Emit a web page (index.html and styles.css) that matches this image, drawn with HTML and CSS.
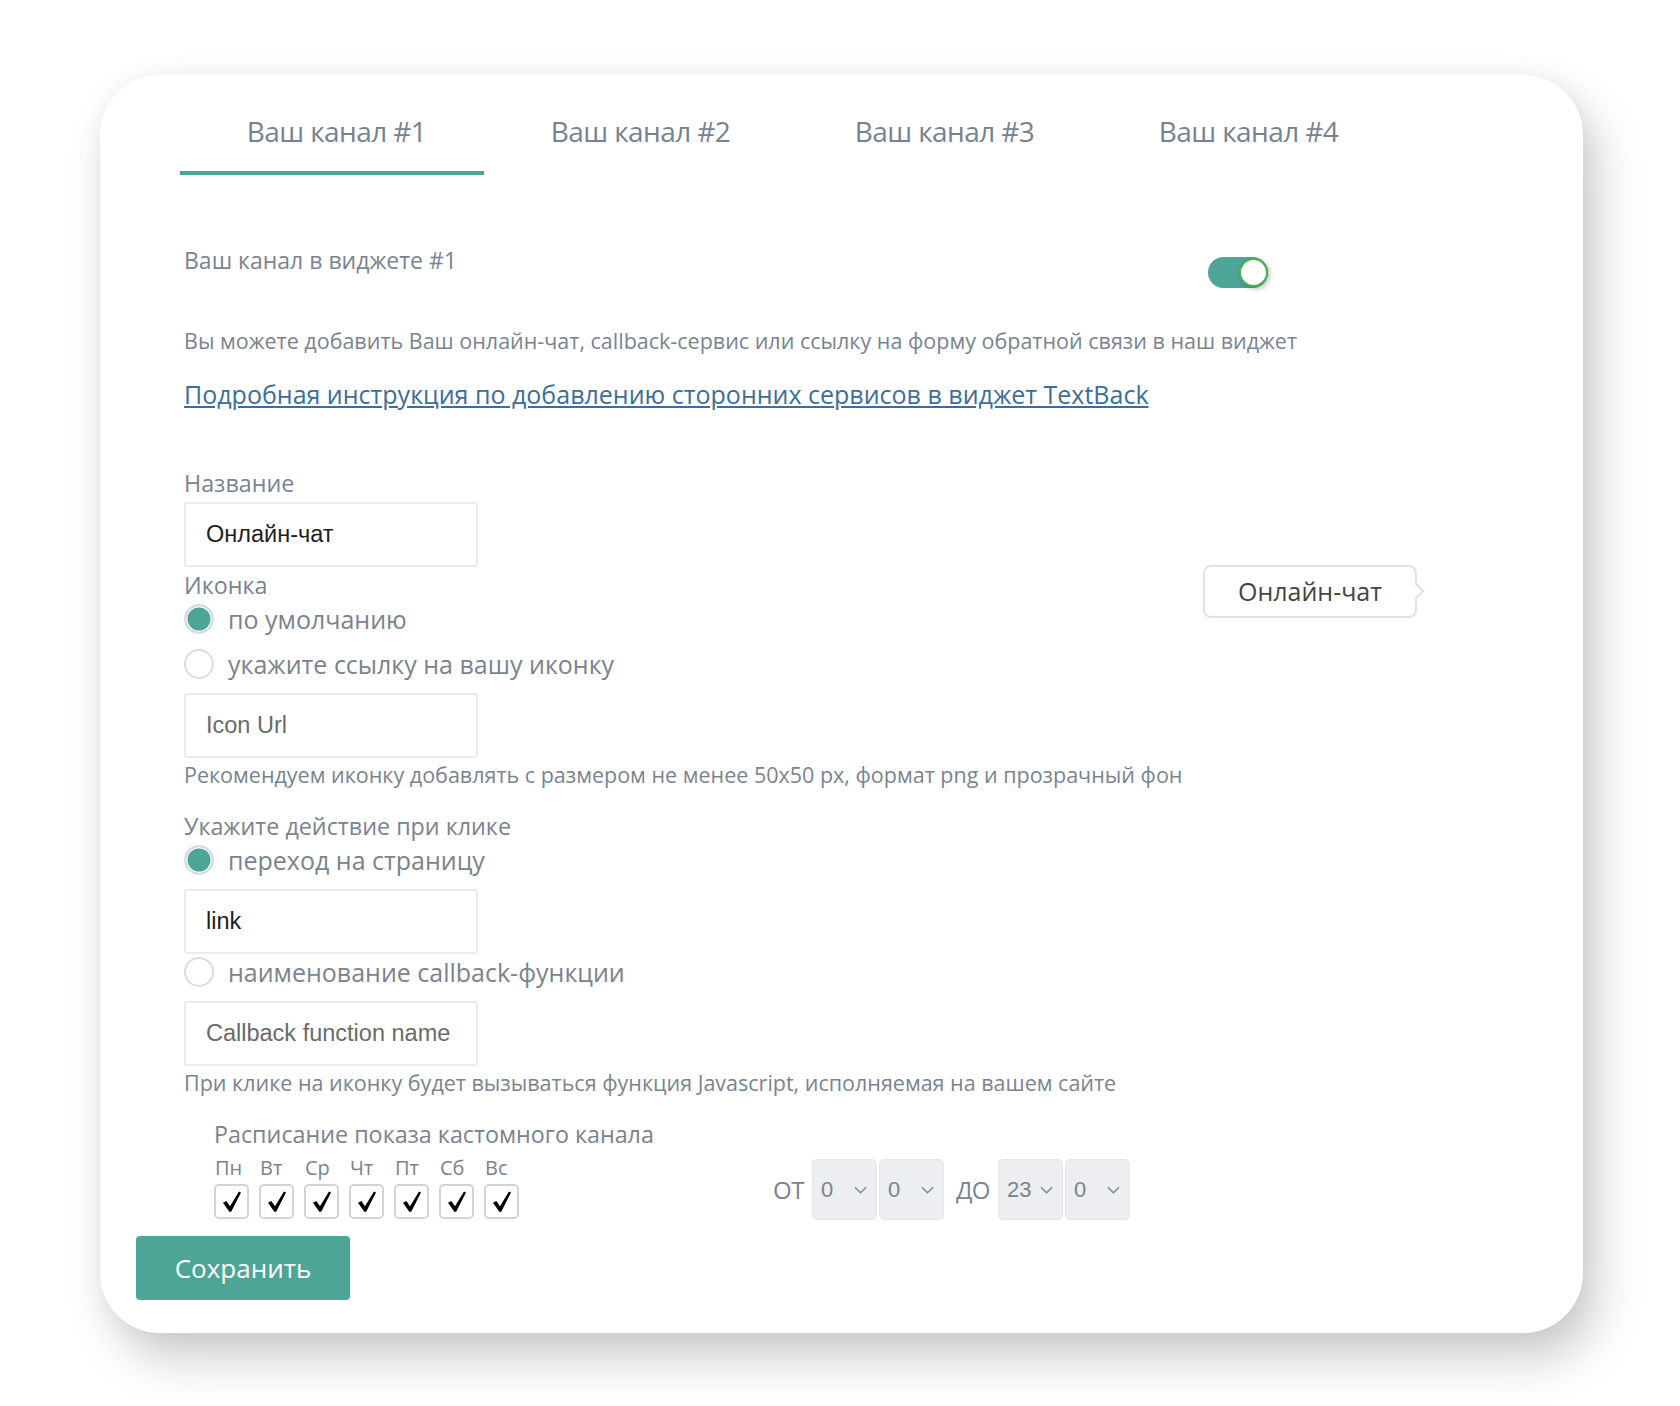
FILE: index.html
```html
<!DOCTYPE html>
<html lang="ru">
<head>
<meta charset="UTF-8" />
<title>TextBack — Ваш канал</title>
<link rel="stylesheet" href="styles.css">
</head>
<body>
  <div class="card">
    <div class="tabs">
      <div class="tab active">Ваш канал #1</div>
      <div class="tab">Ваш канал #2</div>
      <div class="tab">Ваш канал #3</div>
      <div class="tab">Ваш канал #4</div>
    </div>

    <div class="content">
      <div class="channel-row">
        <div class="channel-title">Ваш канал в виджете #1</div>
        <div class="toggle"><span class="knob"></span></div>
      </div>

      <p class="description">Вы можете добавить Ваш онлайн-чат, callback-сервис или ссылку на форму обратной связи в наш виджет</p>
      <a class="guide-link" href="#">Подробная инструкция по добавлению сторонних сервисов в виджет TextBack</a>

      <div class="fields">
        <div class="fields-left">
          <div class="field-label first">Название</div>
          <div class="input">Онлайн-чат</div>

          <div class="field-label">Иконка</div>
          <div class="radio-row first">
            <span class="radio checked"></span>
            <span class="radio-text">по умолчанию</span>
          </div>
          <div class="radio-row second">
            <span class="radio"></span>
            <span class="radio-text">укажите ссылку на вашу иконку</span>
          </div>
          <div class="input placeholder">Icon Url</div>
          <p class="hint">Рекомендуем иконку добавлять с размером не менее 50x50 px, формат png и прозрачный фон</p>

          <div class="field-label action">Укажите действие при клике</div>
          <div class="radio-row first">
            <span class="radio checked"></span>
            <span class="radio-text">переход на страницу</span>
          </div>
          <div class="input">link</div>
          <div class="radio-row tight">
            <span class="radio"></span>
            <span class="radio-text">наименование callback-функции</span>
          </div>
          <div class="input placeholder">Callback function name</div>
          <p class="hint">При клике на иконку будет вызываться функция Javascript, исполняемая на вашем сайте</p>
        </div>

        <div class="fields-right">
          <div class="preview">Онлайн-чат</div>
        </div>
      </div>

      <div class="schedule">
        <div class="schedule-days">
          <div class="schedule-title">Расписание показа кастомного канала</div>
          <div class="days">
            <div class="day"><span>Пн</span><div class="check"><svg viewBox="0 0 16 18"><path d="M0 10.2 L3 8.6 L6.2 13.2 L14.2 0 L16 1.1 L7.3 18 L5.6 18 Z"/></svg></div></div>
            <div class="day"><span>Вт</span><div class="check"><svg viewBox="0 0 16 18"><path d="M0 10.2 L3 8.6 L6.2 13.2 L14.2 0 L16 1.1 L7.3 18 L5.6 18 Z"/></svg></div></div>
            <div class="day"><span>Ср</span><div class="check"><svg viewBox="0 0 16 18"><path d="M0 10.2 L3 8.6 L6.2 13.2 L14.2 0 L16 1.1 L7.3 18 L5.6 18 Z"/></svg></div></div>
            <div class="day"><span>Чт</span><div class="check"><svg viewBox="0 0 16 18"><path d="M0 10.2 L3 8.6 L6.2 13.2 L14.2 0 L16 1.1 L7.3 18 L5.6 18 Z"/></svg></div></div>
            <div class="day"><span>Пт</span><div class="check"><svg viewBox="0 0 16 18"><path d="M0 10.2 L3 8.6 L6.2 13.2 L14.2 0 L16 1.1 L7.3 18 L5.6 18 Z"/></svg></div></div>
            <div class="day"><span>Сб</span><div class="check"><svg viewBox="0 0 16 18"><path d="M0 10.2 L3 8.6 L6.2 13.2 L14.2 0 L16 1.1 L7.3 18 L5.6 18 Z"/></svg></div></div>
            <div class="day"><span>Вс</span><div class="check"><svg viewBox="0 0 16 18"><path d="M0 10.2 L3 8.6 L6.2 13.2 L14.2 0 L16 1.1 L7.3 18 L5.6 18 Z"/></svg></div></div>
          </div>
        </div>

        <div class="time-range">
          <span class="range-word">ОТ</span>
          <div class="select"><span>0</span><svg viewBox="0 0 14 8"><path d="M1 1 L7 7 L13 1"/></svg></div>
          <div class="select"><span>0</span><svg viewBox="0 0 14 8"><path d="M1 1 L7 7 L13 1"/></svg></div>
          <span class="range-word to">ДО</span>
          <div class="select"><span>23</span><svg viewBox="0 0 14 8"><path d="M1 1 L7 7 L13 1"/></svg></div>
          <div class="select"><span>0</span><svg viewBox="0 0 14 8"><path d="M1 1 L7 7 L13 1"/></svg></div>
        </div>
      </div>

      <button class="save-btn">Сохранить</button>
    </div>
  </div>
</body>
</html>
```

FILE: styles.css
```css
body {
  margin: 0;
  padding: 75px 0 73px 100px;
  background-color: #fff;
  font-family: 'Open Sans', 'Liberation Sans', sans-serif;
  color: #7a8390;
}
.card {
  box-sizing: border-box;
  width: 1483px;
  height: 1258px;
  padding: 37px 0 0 80px;
  background-color: #fff;
  border-radius: 60px;
  box-shadow: 14px 26px 48px rgba(0, 0, 0, 0.2), 0 0 28px rgba(0, 0, 0, 0.05);
}
.tabs {
  display: flex;
}
.tab {
  width: 304px;
  box-sizing: border-box;
  padding-left: 9px;
  text-align: center;
  font-size: 28px;
  line-height: 38px;
  padding-bottom: 21px;
  border-bottom: 4px solid transparent;
  color: #77818f;
  letter-spacing: -0.6px;
}
.tab.active {
  border-bottom-color: #4da597;
}
.content {
  padding-left: 4px;
}
.channel-row {
  display: flex;
  justify-content: space-between;
  align-items: flex-start;
  width: 1084px;
  margin-top: 70px;
}
.channel-title {
  font-size: 23px;
  line-height: 30px;
}
.toggle {
  display: flex;
  justify-content: flex-end;
  align-items: center;
  width: 60px;
  height: 31px;
  margin-top: 12px;
  border-radius: 16px;
  background-color: #4da597;
}
.knob {
  width: 25px;
  height: 25px;
  border: 2px solid #4caf50;
  border-radius: 50%;
  background-color: #fff;
  box-shadow: 2px 2px 5px rgba(0, 0, 0, 0.25);
}
.description {
  margin: 39px 0 0 0;
  font-size: 21.5px;
  line-height: 28px;
}
.guide-link {
  display: inline-block;
  margin-top: 23px;
  font-size: 25px;
  line-height: 32px;
  color: #3d6e98;
}
.fields {
  display: flex;
}
.fields-left {
  flex: 0 0 1019px;
}
.field-label {
  font-size: 23.3px;
  line-height: 30px;
  margin-top: 3px;
}
.field-label.first {
  margin-top: 58px;
}
.field-label.action {
  margin-top: 22px;
}
.input {
  box-sizing: border-box;
  width: 294px;
  height: 65px;
  margin-top: 4px;
  padding-left: 20px;
  border: 2px solid #ebebeb;
  border-radius: 3px;
  font-family: 'Liberation Sans', Arial, sans-serif;
  font-size: 23.5px;
  line-height: 61px;
  color: #1e1e1e;
}
.radio-row + .input {
  margin-top: 11px;
}
.input.placeholder {
  color: #6a6a6a;
}
.radio-row {
  display: flex;
  align-items: center;
  height: 36px;
}
.radio-row.first {
  margin-top: 1px;
}
.radio-row.second {
  margin-top: 9px;
}
.radio {
  box-sizing: border-box;
  width: 30px;
  height: 30px;
  border: 2px solid #d9dde2;
  border-radius: 50%;
  background-color: #fff;
}
.radio.checked {
  background-color: #4da597;
  box-shadow: inset 0 0 0 1.5px #fff;
}
.radio-text {
  margin-left: 14px;
  font-size: 25px;
  line-height: 36px;
}
.hint {
  margin: 3px 0 0 0;
  font-size: 21.5px;
  line-height: 28px;
}
.fields-right {
  padding-top: 155px;
}
.preview {
  position: relative;
  box-sizing: border-box;
  width: 214px;
  height: 53px;
  border: 2px solid #e2e2e2;
  border-radius: 8px;
  text-align: center;
  font-size: 25px;
  line-height: 49px;
  color: #454545;
}
.preview::after {
  content: '';
  position: absolute;
  right: -7px;
  top: 18px;
  width: 10px;
  height: 10px;
  background-color: #fff;
  border-top: 2px solid #e2e2e2;
  border-right: 2px solid #e2e2e2;
  transform: rotate(45deg);
}
.schedule {
  display: flex;
  align-items: flex-end;
  margin-top: 22px;
  padding-left: 30px;
}
.schedule-days {
  flex: 0 0 559px;
}
.schedule-title {
  font-size: 23.3px;
  line-height: 30px;
}
.days {
  display: flex;
  gap: 10px;
  margin-top: 7px;
}
.day {
  display: flex;
  flex-direction: column;
  width: 35px;
}
.day span {
  font-size: 20px;
  line-height: 24px;
  padding-left: 1px;
}
.check {
  box-sizing: border-box;
  display: flex;
  justify-content: center;
  align-items: center;
  width: 35px;
  height: 35px;
  margin-top: 4px;
  border: 2px solid #d4d4d4;
  border-radius: 5px;
}
.check svg {
  width: 18px;
  height: 21px;
  fill: #000;
}
.time-range {
  display: flex;
  align-items: center;
  margin-bottom: -1px;
}
.range-word {
  font-size: 24px;
  margin-right: 8px;
  letter-spacing: -0.5px;
}
.range-word.to {
  margin-left: 10px;
  margin-right: 8px;
}
.select {
  box-sizing: border-box;
  display: flex;
  align-items: center;
  justify-content: space-between;
  width: 65px;
  height: 61px;
  margin-right: 2px;
  padding: 0 9px 0 8px;
  border: 1px solid #e4e6ea;
  border-radius: 5px;
  background-color: #eceef1;
  font-family: 'Liberation Sans', Arial, sans-serif;
  font-size: 22px;
  color: #7a8390;
}
.select svg {
  width: 13px;
  height: 8px;
  fill: none;
  stroke: #7a8390;
  stroke-width: 1.4;
}
.save-btn {
  display: block;
  width: 214px;
  height: 64px;
  margin: 17px 0 0 -48px;
  border: none;
  border-radius: 4px;
  background-color: #4da597;
  color: #fff;
  font-family: 'Open Sans', 'Liberation Sans', sans-serif;
  font-size: 26px;
  cursor: pointer;
}
```
